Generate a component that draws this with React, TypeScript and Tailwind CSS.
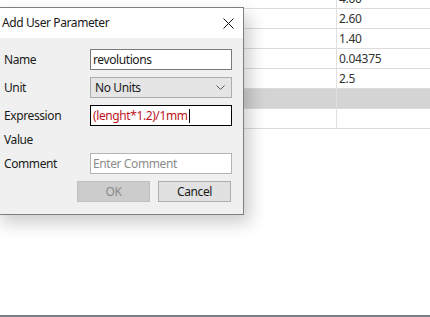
import React from "react";

const rows = ["4.00", "2.60", "1.40", "0.04375", "2.5", "", ""];

function Field({ label, children }: { label: string; children?: React.ReactNode }) {
  return (
    <div className="flex items-center h-[21px]">
      <span className="w-[95px] pl-[9px] shrink-0">{label}</span>
      {children}
    </div>
  );
}

export default function App() {
  return (
    <div
      className="relative w-[430px] h-[317px] overflow-hidden bg-white text-[12px] text-[#000]"
      style={{ fontFamily: '"Noto Sans", "Segoe UI", sans-serif' }}
    >
      {/* Background parameter table */}
      <div className="flex flex-col h-full border-b-2 border-[#7a8089]">
        <div className="flex flex-col -mt-[11px]">
          {rows.map((v, i) => (
            <div
              key={i}
              className={`flex h-[20px] border-b border-[#dcdcdc] ${i === 5 ? "bg-[#d4d4d4]" : ""}`}
            >
              <div className="w-[337px] shrink-0 border-r border-[#e0e0e0]" />
              <div className="pl-[2px] leading-[19px] text-[#333] tracking-[-0.3px]">{v}</div>
            </div>
          ))}
        </div>
      </div>

      {/* Dialog */}
      <div className="absolute left-[-6px] top-[7px] w-[250px] h-[208px] bg-[#f0f0f0] border border-[#7f7f7f] shadow-[6px_8px_16px_rgba(0,0,0,0.2)] flex flex-col tracking-[-0.4px]">
        <div className="h-[30px] bg-white flex items-center justify-between pl-[7px] pr-[9px]">
          <span className="text-[12px] text-[#1a1a1a]">Add User Parameter</span>
          <svg width="11" height="11" viewBox="0 0 11 11" className="mt-[1px]">
            <path d="M0.5 0.5 L10.5 10.5 M10.5 0.5 L0.5 10.5" stroke="#111" strokeWidth="1" />
          </svg>
        </div>
        <div className="flex flex-col pt-[11px] gap-[7px] text-[#1a1a1a]">
          <Field label="Name">
            <div className="w-[142px] h-[21px] bg-white border border-[#7a7a7a] pl-[2px] leading-[19px]">revolutions</div>
          </Field>
          <Field label="Unit">
            <div className="w-[142px] h-[21px] bg-[#e5e5e5] border border-[#adadad] pl-[4px] pr-[6px] flex items-center justify-between">
              <span>No Units</span>
              <svg width="9" height="5" viewBox="0 0 9 5">
                <path d="M0.5 0.5 L4.5 4.5 L8.5 0.5" stroke="#555" fill="none" strokeWidth="1" />
              </svg>
            </div>
          </Field>
          <Field label="Expression">
            <div className="w-[142px] h-[21px] bg-white border border-[#000] pl-[2px] leading-[19px] flex items-center text-[#c0141c]">
              <span>(lenght*1.2)/1mm</span>
              <span className="w-px h-[14px] bg-black ml-[1px]" />
            </div>
          </Field>
          <div className="flex items-center h-[13px]">
            <span className="pl-[9px]">Value</span>
          </div>
          <Field label="Comment">
            <div className="w-[142px] h-[21px] bg-white border border-[#b4b4b4] pl-[2px] leading-[19px] text-[#8c8c8c]">Enter Comment</div>
          </Field>
          <div className="flex justify-end gap-[8px] pr-[12px]">
            <div className="w-[73px] h-[21px] bg-[#cccccc] border border-[#bfbfbf] flex items-center justify-center text-[#8a8a8a]">OK</div>
            <div className="w-[73px] h-[21px] bg-[#e1e1e1] border border-[#adadad] flex items-center justify-center">Cancel</div>
          </div>
        </div>
      </div>
    </div>
  );
}
